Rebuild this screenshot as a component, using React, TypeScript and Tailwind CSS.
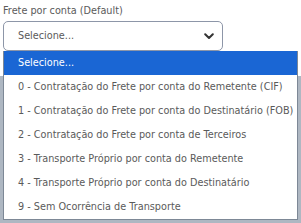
const options = [
  "0 - Contratação do Frete por conta do Remetente (CIF)",
  "1 - Contratação do Frete por conta do Destinatário (FOB)",
  "2 - Contratação do Frete por conta de Terceiros",
  "3 - Transporte Próprio por conta do Remetente",
  "4 - Transporte Próprio por conta do Destinatário",
  "9 - Sem Ocorrência de Transporte",
];

export default function App() {
  return (
    <main className="relative h-[223px] w-[301px] overflow-hidden bg-white font-['DejaVu_Sans',sans-serif] text-[#5a5a5a]">
      <div className="px-[3px] pt-[4px]">
        <label className="block text-[9.7px] leading-[14px]">
          Frete por conta (Default)
        </label>
        <div className="mt-[3px] flex h-[30px] w-[220px] items-center justify-between rounded-[5px] border border-[#8d96a8] bg-white pl-[14px] pr-[8px] text-[9.7px]">
          <span>Selecione...</span>
          <svg width="10" height="7" viewBox="0 0 10 7" className="text-[#333]">
            <path d="M1.2 1.2 L5 5 L8.8 1.2" fill="none" stroke="currentColor" strokeWidth="2" strokeLinecap="round" strokeLinejoin="round" />
          </svg>
        </div>
      </div>
      <div className="absolute left-0 right-0 top-[76px] bottom-0 bg-[#aeb7c2]" />
      <ul className="absolute left-[3px] top-[51px] w-[295px] border border-t-0 border-[#7d8896] bg-white text-[9.7px]">
        <li className="flex h-[24px] items-center bg-[#1a66d4] pl-[14px] text-white">Selecione...</li>
        {options.map((o) => (
          <li key={o} className="flex h-[24px] items-center whitespace-nowrap pl-[14px]">
            {o}
          </li>
        ))}
      </ul>
    </main>
  );
}
